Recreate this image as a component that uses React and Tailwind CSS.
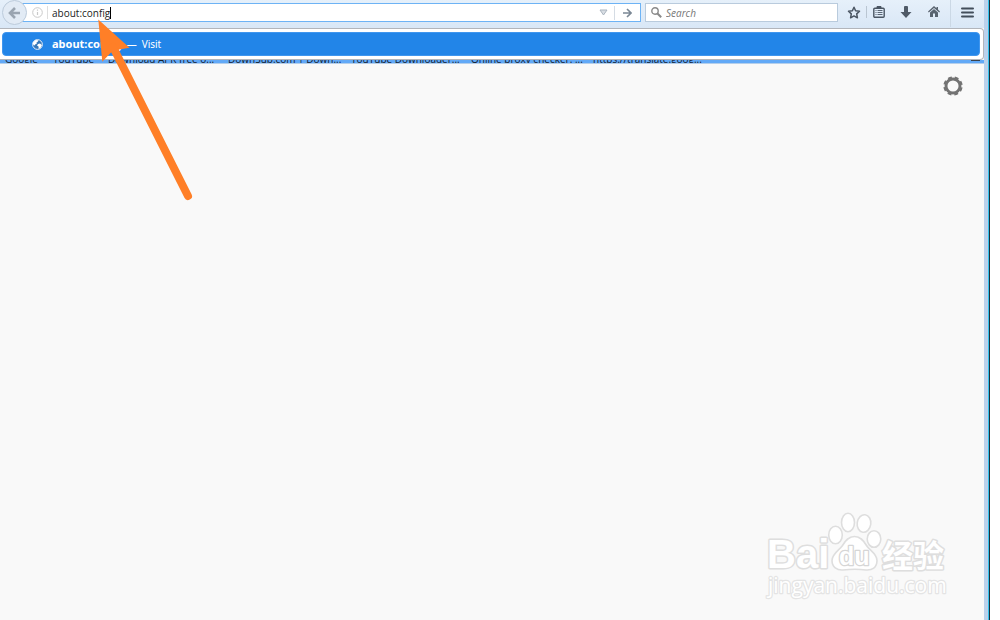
import React from "react";

const bookmarks = [
  ["Google", "w-12"],
  ["YouTube", "w-[55px]"],
  ["Download APK free o...", "w-[120px]"],
  ["DownSub.com | Down...", "w-[123px]"],
  ["YouTube Downloader...", "w-[120px]"],
  ["Online proxy checker. ...", "w-[122px]"],
  ["https://translate.goog...", "w-[120px]"],
];

function ToolButton({ label, className, children }) {
  return (
    <button type="button" aria-label={label} className={`flex h-6 items-center justify-center ${className}`}>
      {children}
    </button>
  );
}

function Toolbar() {
  return (
    <header className="flex h-7 items-start bg-gradient-to-b from-[#e6f0fa] to-[#d9e7f6] pl-[2px]">
      <button
        type="button"
        aria-label="Back"
        className="z-10 flex h-[25px] w-[25px] shrink-0 items-center justify-center rounded-full border border-[#bccbdb] bg-[#e2ebf5]"
      >
        <svg width="13" height="12" viewBox="0 0 13 12" fill="none" stroke="#9aa5b1" strokeWidth="2.6">
          <path d="M7 1 2 6l5 5M2.500 6H12" />
        </svg>
      </button>
      <form className="-ml-2 mt-[3px] flex h-[19px] min-w-0 flex-1 items-center border border-[#6db3f5] bg-white pl-3">
        <svg width="11" height="11" viewBox="0 0 11 11" fill="none" stroke="#c9c9c9" className="shrink-0">
          <circle cx="5.500" cy="5.500" r="4.800" />
          <path d="M5.500 5v3M5.500 2.500v1.200" strokeWidth="1.200" />
        </svg>
        <div className="ml-1 h-[13px] w-px bg-[#dedede]" />
        <div className="ml-1 flex min-w-0 flex-1 items-center">
          <input
            aria-label="Address"
            defaultValue="about:config"
            className="w-[58px] bg-transparent font-['Open_Sans','Noto_Sans',sans-serif] text-[10px] leading-4 text-[#222] outline-none"
          />
          <div className="h-3 w-px bg-black" />
        </div>
        <button type="button" aria-label="Show history" className="mr-[6px]">
          <svg width="9" height="7" viewBox="0 0 9 7" fill="#d9dee4" stroke="#aab4be">
            <path d="M1 1h7L4.500 6z" />
          </svg>
        </button>
        <div className="h-[14px] w-px bg-[#d5dce4]" />
        <button type="submit" aria-label="Go" className="flex w-[25px] justify-center">
          <svg width="9" height="10" viewBox="0 0 9 10" fill="none" stroke="#7b8895" strokeWidth="1.600">
            <path d="M0 5h7.500M4 1l4 4-4 4" />
          </svg>
        </button>
      </form>
      <form className="ml-1 mt-[3px] flex h-[19px] w-[193px] shrink-0 items-center border border-[#b9cbdd] bg-white pl-[5px]">
        <svg width="11" height="11" viewBox="0 0 11 11" fill="none" stroke="#8a8a8a">
          <circle cx="4" cy="4" r="3.200" strokeWidth="1.400" />
          <path d="m6.500 6.500 3.700 3.700" strokeWidth="2" />
        </svg>
        <input
          aria-label="Search"
          placeholder="Search"
          className="ml-1 min-w-0 flex-1 bg-transparent font-['Open_Sans','Noto_Sans',sans-serif] text-[10px] italic leading-4 outline-none placeholder:text-[#777]"
        />
      </form>
      <ToolButton label="Bookmark this page" className="ml-1 w-6">
        <svg width="14" height="13" viewBox="0 0 14 13" fill="none" stroke="#4b5663" strokeWidth="1.500" strokeLinejoin="round">
          <path d="m7 1.200 1.600 3.500 3.900.5-2.800 2.700.7 3.900L7 9.900l-3.400 1.900.7-3.900-2.800-2.700 3.900-.5z" />
        </svg>
      </ToolButton>
      <div className="mt-1.5 h-3 w-px bg-[#bac6d2]" />
      <ToolButton label="Bookmarks list" className="w-[23px]">
        <svg width="12" height="12" viewBox="0 0 12 12" fill="none" stroke="#4b5663">
          <rect x=".8" y="2.200" width="10.400" height="9" rx="1" strokeWidth="1.400" />
          <path d="M4 .5h4v2H4z" fill="#4b5663" />
          <path d="M2.500 4.500h1M4.500 4.500h5M2.500 6.500h1M4.500 6.500h5M2.500 8.500h1M4.500 8.500h5" strokeWidth=".9" />
        </svg>
      </ToolButton>
      <ToolButton label="Downloads" className="ml-1 w-6">
        <svg width="12" height="12" viewBox="0 0 12 12" fill="#4f5a67">
          <path d="M4 1q0-1 1-1h2q1 0 1 1v5h3.500L6 12 .5 6H4z" />
        </svg>
      </ToolButton>
      <ToolButton label="Home" className="ml-1 w-6">
        <svg width="12" height="12" viewBox="0 0 12 12" fill="#596470">
          <path d="M6 0 8.500 2.200V1H10v2.600l2 2-.8.900L6 1.900.8 6.500 0 5.600z" />
          <path d="m6 3 4 3.500V11H7V7.500H5V11H2V6.500z" />
        </svg>
      </ToolButton>
      <div className="ml-1 h-[27px] w-px bg-[#cbd8e5]" />
      <ToolButton label="Open menu" className="w-[33px]">
        <svg width="13" height="11" viewBox="0 0 13 11" stroke="#434e5b" strokeWidth="2" strokeLinecap="round">
          <path d="M1 1.500h11M1 5.500h11M1 9.500h11" />
        </svg>
      </ToolButton>
    </header>
  );
}

function Suggestions() {
  return (
    <div className="rounded-r-sm border-y border-r border-[#b2b5bb] bg-white py-[3px] pl-[2px] pr-[3px]">
      <a
        href="about:config"
        className="flex h-6 items-center rounded-sm border border-[#4096ee] bg-[#2285e8] pl-[29px] font-['Noto_Sans','Open_Sans',sans-serif] text-white"
      >
        <svg width="11" height="11" viewBox="0 0 11 11">
          <circle cx="5.500" cy="5.500" r="4.900" fill="#3477b9" stroke="#e3edf8" />
          <path fill="#fff" d="M1 3.500 3.500 1l3 .2L5.500 3l-1 .6.200 1.400-1.500.3-.2 1.200L1 5.500zM6 5l2-.5L10 6 8.600 8.700 6.700 10 6.500 7.500 5 6.500z" />
        </svg>
        <span className="ml-[9px] text-[11px] font-bold leading-4">about:config</span>
        <span className="ml-[5px] text-[10px] leading-4">—</span>
        <span className="ml-[5px] text-[10px] leading-4">Visit</span>
      </a>
    </div>
  );
}

function BookmarksBar() {
  return (
    <nav className="flex h-1 items-end overflow-hidden border-b border-[#b5cfeb] bg-[#62a9f7] pl-[5px] font-['Open_Sans','Noto_Sans',sans-serif] text-[10px] leading-[8px] text-[#15202e]">
      {bookmarks.map(([name, width]) => (
        <a key={name} href="#" className={`shrink-0 whitespace-nowrap ${width}`}>
          {name}
        </a>
      ))}
      <div className="ml-auto mr-1 h-[3px] w-[9px] border-t border-[#39424d]" />
    </nav>
  );
}

function Gear() {
  return (
    <svg width="20" height="20" viewBox="-10 -10 20 20" fill="none" stroke="#737373">
      <circle r="7" strokeWidth="2.900" />
      <circle r="8.700" strokeWidth="2" strokeDasharray="3.900 2.933" strokeDashoffset="-1.500" />
    </svg>
  );
}

function Watermark() {
  return (
    <svg
      width="190"
      height="100"
      viewBox="0 0 190 100"
      fill="#fff"
      stroke="#dedede"
      strokeWidth="3"
      strokeLinejoin="round"
      className="pointer-events-none absolute bottom-[15px] right-[34px]"
    >
      <text x="7" y="63" fontFamily="Liberation Sans, sans-serif" fontWeight="700" fontSize="40" paintOrder="stroke">Bai</text>
      <g strokeWidth="1.600">
        <ellipse cx="75.500" cy="30" rx="6.800" ry="8.800" />
        <ellipse cx="88" cy="17.500" rx="6.500" ry="9.200" />
        <ellipse cx="104" cy="18.500" rx="6.800" ry="8.800" transform="rotate(8 104 18.500)" />
        <ellipse cx="114" cy="34" rx="6.800" ry="8.300" />
        <path d="M94.500 31.500c6 0 9 4 12 9 3 5 10.500 8 10.500 15 0 7-5 10-11 9.500-8-1-14-1-23 0-6 .5-11-3-11-9.500 0-7 7-10 10.500-15 3-5 6-9 12-9z" />
      </g>
      <text x="79" y="60" fontFamily="Liberation Sans, sans-serif" fontWeight="700" fontSize="25" strokeWidth="2.600" stroke="#d6d6d6" paintOrder="stroke">du</text>
      <text x="122" y="62" fontFamily="Noto Sans CJK SC, sans-serif" fontWeight="700" fontSize="31" paintOrder="stroke">经验</text>
      <text x="8" y="88" fontFamily="Open Sans, Noto Sans, sans-serif" fontSize="21" strokeWidth="2.400" stroke="#e4e4e4" paintOrder="stroke">jingyan.baidu.com</text>
    </svg>
  );
}

function Arrow() {
  return (
    <svg width="200" height="210" viewBox="0 0 200 210" className="pointer-events-none absolute left-0 top-0 z-20">
      <path d="M98.300 19.500 129.500 47.700 119 49.500 111 52.500 102.300 61.700z" fill="#ff7f27" />
      <path d="M113 47 188 196" fill="none" stroke="#ff7f27" strokeWidth="8" strokeLinecap="round" />
    </svg>
  );
}

export default function App() {
  return (
    <div className="flex min-h-screen bg-white">
      <div className="relative flex min-w-0 flex-1 flex-col bg-[#f9f9f9]">
        <Toolbar />
        <Suggestions />
        <BookmarksBar />
        <main className="flex flex-1 items-start justify-end pr-[21px] pt-3">
          <button type="button" aria-label="Customize page">
            <Gear />
          </button>
        </main>
        <Watermark />
        <Arrow />
      </div>
      <div className="w-1 bg-[#bad1ec]" />
      <div className="w-px bg-[#35c3ee]" />
      <div className="w-px bg-[#20303c]" />
      <div className="w-2.5 bg-white" />
    </div>
  );
}
